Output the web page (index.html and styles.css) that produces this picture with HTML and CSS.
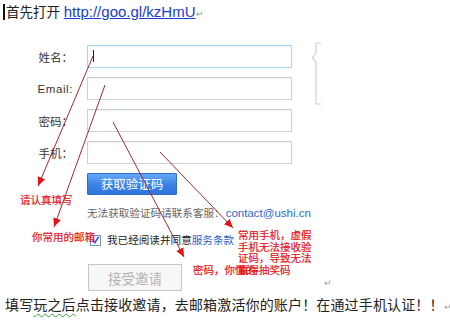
FILE: index.html
```html
<!DOCTYPE html>
<html>
<head>
    <title>邀请注册</title>
    <link rel="stylesheet" href="styles.css">
</head>
<body>
<div class="page">

    <!-- 第一行 -->
    <p class="line first"><span class="cursor"></span>首先打开 <a href="#" class="doc-link">http://goo.gl/kzHmU</a><span class="ret">↵</span></p>

    <!-- 注册表单截图 -->
    <div class="form">
        <label>姓名：</label>
        <div class="input focus"><span class="caret"></span></div>
        <label class="en">Email:</label>
        <div class="input"></div>
        <label>密码：</label>
        <div class="input"></div>
        <label>手机：</label>
        <div class="input"></div>
    </div>

    <div class="actions">
        <button class="btn-code">获取验证码</button>
        <p class="help">无法获取验证码请联系客服：<a href="#" class="mail">contact@ushi.cn</a></p>
        <p class="agree"><span class="check"><svg width="10" height="10" viewBox="0 0 10 10"><path d="M2 5 L4.2 8 L8.5 1.5" fill="none" stroke="#1f4fd0" stroke-width="1.6"/></svg></span>我已经阅读并同意<a href="#" class="terms">服务条款</a></p>
        <div class="accept-row">
            <button class="btn-accept" disabled>接受邀请</button>
            <span class="ret mid">↵</span>
        </div>
    </div>

    <!-- 最后一行 -->
    <p class="line last">填写<span class="wavy">玩之后</span>点击接收邀请，去邮箱激活你的账户！在通过手机认证！！<span class="ret end">↵</span></p>

    <!-- 标注箭头 -->
    <svg class="marks" width="450" height="325" viewBox="0 0 450 325">
        <defs>
            <marker id="head" markerUnits="userSpaceOnUse" markerWidth="10" markerHeight="10" refX="9" refY="5" orient="auto">
                <path d="M0 1 L9 5 L0 9 Z" fill="#e3141c"/>
            </marker>
        </defs>
        <g stroke="#9b2a3a" stroke-width="1" fill="none" marker-end="url(#head)">
            <line x1="93" y1="56" x2="38" y2="186"/>
            <line x1="105" y1="85" x2="54" y2="227"/>
            <line x1="113" y1="122" x2="184" y2="257"/>
            <line x1="160" y1="152" x2="233" y2="228"/>
        </g>
        <path d="M321 43 H316 V53 L312.5 57.5 L316 62 V104 H321" fill="none" stroke="#d0d0d0" stroke-width="1.2"/>
    </svg>

    <span class="note n1">请认真填写</span>
    <span class="note n2">你常用的邮箱</span>
    <span class="note n3">密码，你懂的</span>
    <span class="note n4">常用手机，虚假<br>手机无法接收验<br>证码，导致无法<br>赢得抽奖码</span>

</div>
</body>
</html>
```

FILE: styles.css
```css
body { margin: 0; background: #fff; font-family: "Liberation Sans", "Noto Sans CJK SC", sans-serif; color: #222; }
.page { position: relative; width: 450px; height: 325px; overflow: hidden; }
p { margin: 0; }

/* 文档行 */
.line { font-size: 13.5px; line-height: 20px; }
.first { padding: 2px 0 0 3px; height: 20px; }
.cursor { display: inline-block; width: 2px; height: 16px; background: #111; vertical-align: -3px; margin-right: 1px; }
.doc-link { font-size: 15px; color: #1b3bd0; text-decoration: underline; }
.ret { font-size: 9px; color: #999; margin-left: 1px; }
.ret.end { margin-left: 0; letter-spacing: 0; }
.last { font-size: 14px; letter-spacing: 0.15px; padding-left: 5px; margin-top: 5px; line-height: 18px; white-space: nowrap; }
.wavy { text-decoration: underline wavy #3aa03a; text-decoration-thickness: 1px; text-underline-offset: 3px; }

/* 表单 */
.form { display: grid; grid-template-columns: 73px 205px; grid-auto-rows: 23px; column-gap: 14px; row-gap: 9px; margin-top: 23px; }
.form label { text-align: right; font-size: 11.5px; color: #333; align-self: center; }
.form label.en { letter-spacing: 0.6px; }
.input { box-sizing: border-box; border: 1px solid #cbd0d3; background: #fff; box-shadow: inset 0 1px 1px #eef0f1; position: relative; }
.input.focus { border-color: #9fdcf3; }
.caret { position: absolute; left: 5px; top: 4px; width: 1px; height: 12px; background: #222; }

.actions { padding-left: 87px; margin-top: 9px; }
.btn-code { display: block; width: 90px; height: 22px; border: 1px solid #2f6bd0; border-radius: 1px; background: linear-gradient(#66a8f6, #3c82e6 55%, #2f74dc); color: #fff; font-family: "Noto Sans CJK SC", sans-serif; font-size: 12.5px; line-height: 18px; padding: 0; }
.help { margin-top: 10px; font-size: 10.6px; line-height: 16px; color: #666; white-space: nowrap; }
.mail { color: #2a6cc8; text-decoration: none; font-size: 11.5px; margin-left: 1px; }
.agree { margin-top: 11px; font-size: 10.6px; line-height: 16px; color: #222; display: flex; align-items: center; white-space: nowrap; }
.check { box-sizing: border-box; width: 11px; height: 11px; border: 1px solid #7c94b0; background: linear-gradient(#e9eef4, #fff); margin: 0 6px 0 3px; display: flex; align-items: center; justify-content: center; }
.check svg { display: block; }
.terms { color: #2a5fc4; text-decoration: none; }
.accept-row { display: flex; align-items: flex-start; margin-top: 16px; }
.btn-accept { width: 94px; height: 27px; margin-left: 1px; border: 1px solid #c6c6c6; background: #f7f7f7; color: #b4b4b4; font-family: "Noto Sans CJK SC", sans-serif; font-size: 13.5px; padding: 0; }
.ret.mid { margin-left: 142px; margin-top: 14px; line-height: 10px; }

/* 标注 */
.marks { position: absolute; left: 0; top: 0; pointer-events: none; }
.note { position: absolute; color: #e6121b; font-family: "Noto Sans CJK SC", sans-serif; font-size: 10.5px; line-height: 11.5px; white-space: nowrap; -webkit-text-stroke: 0.2px #e6121b; }
.n1 { left: 20px; top: 194px; }
.n2 { left: 32px; top: 231px; }
.n3 { left: 193px; top: 264px; }
.n4 { left: 238px; top: 229px; }
```
